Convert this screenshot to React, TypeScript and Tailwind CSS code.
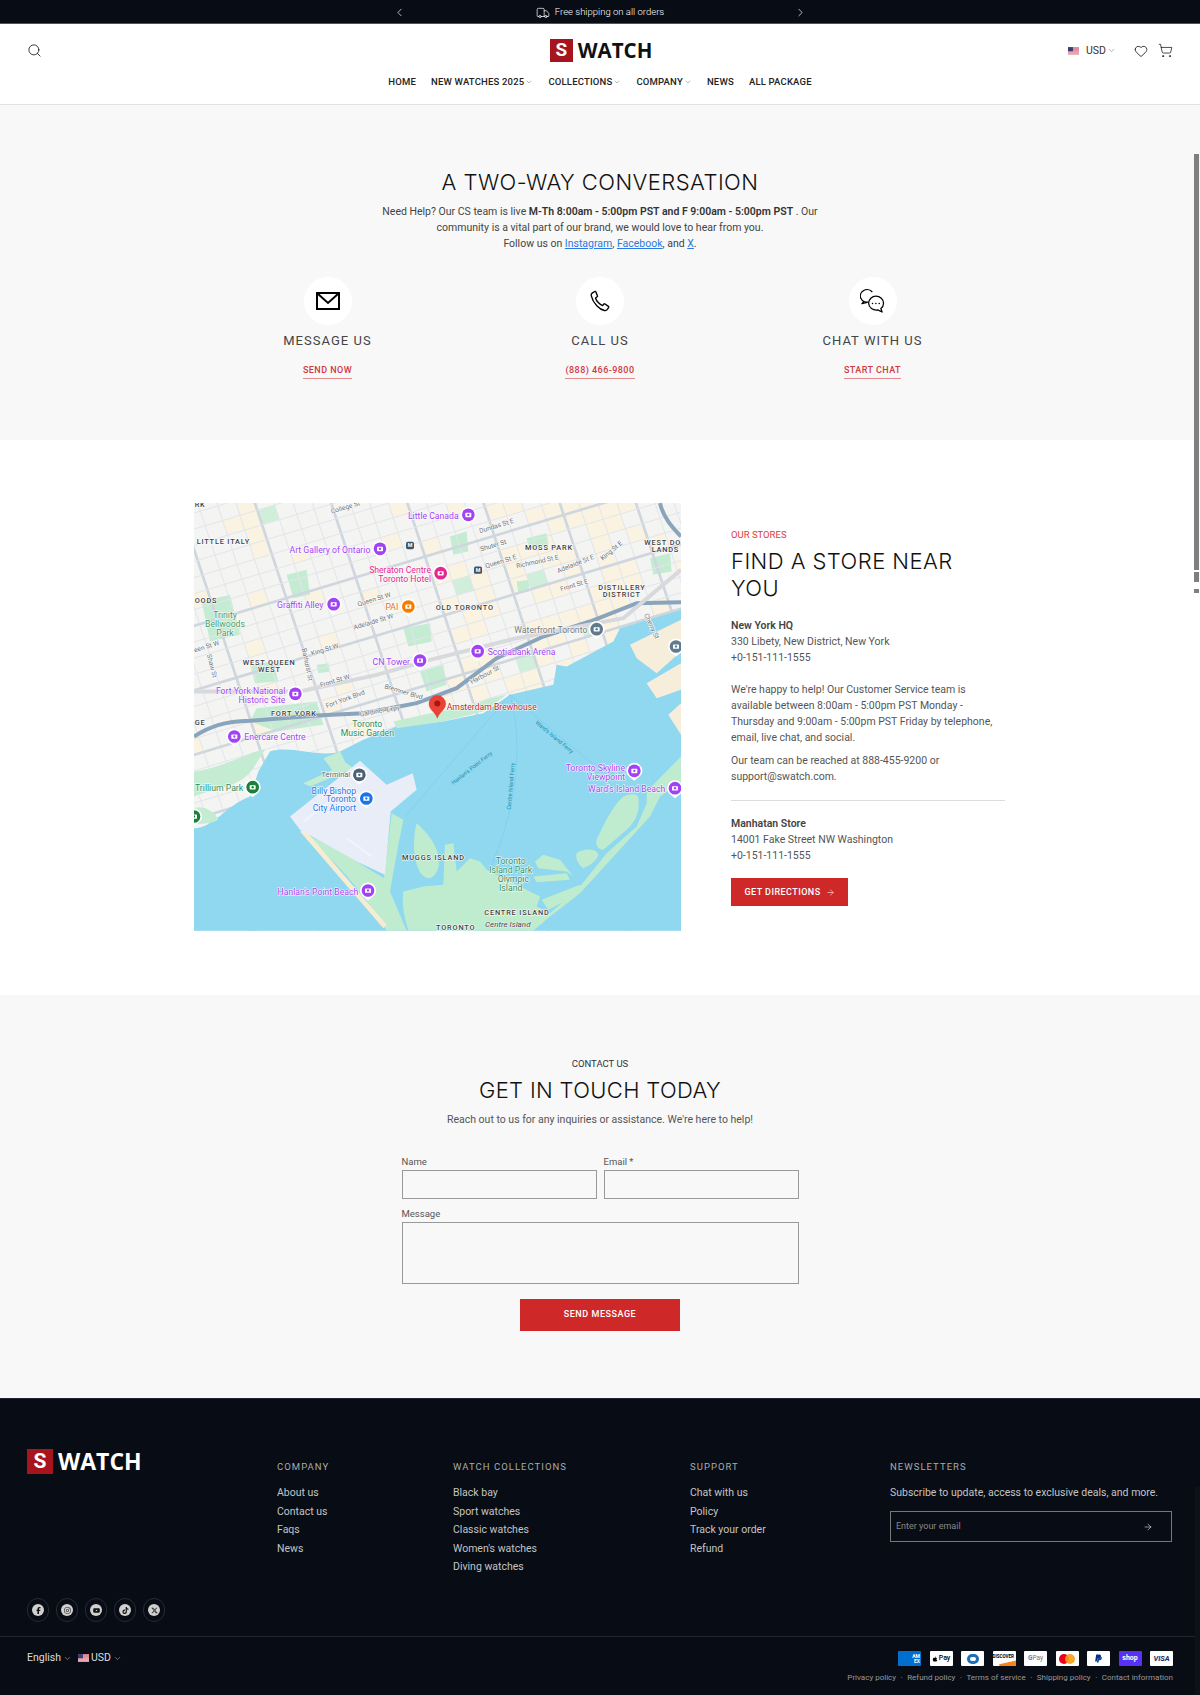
import { ArrowRight, ChevronDown, ChevronLeft, ChevronRight, Heart, Search, ShoppingCart, Truck } from "lucide-react";
import { FaApple, FaFacebookF, FaInstagram, FaPaypal, FaTiktok, FaXTwitter, FaYoutube } from "react-icons/fa6";

const Flag = ({ className }: { className: string }) => (
  <svg viewBox="0 0 20 14" className={className}>
    <rect width="20" height="14" fill="#f4f4f4" />
    {[0, 2, 4, 6, 8, 10, 12].map((y) => (
      <rect key={y} y={y} width="20" height="1.1" fill="#d6455a" />
    ))}
    <rect width="9" height="7.5" fill="#3c3b6e" />
  </svg>
);

const Logo = ({ dark }: { dark?: boolean }) => (
  <div className="flex items-center gap-[5px]">
    <span className={`flex items-center justify-center bg-[#a7141c] font-bold text-white ${dark ? "h-[25px] w-[26px] text-[21px]" : "h-[23px] w-[23px] text-[19px]"}`}>S</span>
    <span className={`font-bold leading-none ${dark ? "text-[23px] text-white" : "text-[20.5px] text-[#111]"}`} style={{ fontFamily: "Open Sans, sans-serif" }}>WATCH</span>
  </div>
);

const navItems = [
  { label: "HOME" },
  { label: "NEW WATCHES 2025", caret: true },
  { label: "COLLECTIONS", caret: true },
  { label: "COMPANY", caret: true },
  { label: "NEWS" },
  { label: "ALL PACKAGE" },
];

const Header = () => (
  <header className="h-[81px] border-b border-[#e3e3e3] bg-white">
    <div className="flex h-[49px] items-center justify-between pl-[27px] pr-[27px] pt-[4px]">
      <Search className="h-[15px] w-[15px] text-[#111]" strokeWidth={1.3} />
      <div className="pl-[92px]"><Logo /></div>
      <div className="flex items-center">
        <Flag className="h-[8px] w-[11px]" />
        <span className="ml-[7px] text-[10.5px] text-[#333]">USD</span>
        <ChevronDown className="ml-[1px] h-[9px] w-[9px] text-[#555]" strokeWidth={1.2} />
        <Heart className="ml-[18px] h-[14px] w-[14px] text-[#111]" strokeWidth={1.4} />
        <ShoppingCart className="ml-[10px] h-[15px] w-[15px] text-[#111]" strokeWidth={1.2} />
      </div>
    </div>
    <nav className="flex items-center justify-center gap-[15px] pt-[2px]">
      {navItems.map((item) => (
        <span key={item.label} className="flex items-center text-[9.5px] font-medium tracking-[0.02em] text-[#222]">
          {item.label}
          {item.caret && <ChevronDown className="ml-[1px] h-[8px] w-[8px] text-[#555]" strokeWidth={1.2} />}
        </span>
      ))}
    </nav>
  </header>
);

const MailIcon = () => (
  <svg viewBox="0 0 24 18" className="h-[18px] w-[24px]" fill="none" stroke="#000" strokeWidth="2">
    <rect x="1" y="1" width="22" height="16" />
    <path d="M1.5 1.5 12 11 22.5 1.5" />
  </svg>
);

const PhoneIcon = () => (
  <svg viewBox="0 0 24 24" className="h-[22px] w-[22px]" fill="none" stroke="#000" strokeWidth="1.5" strokeLinejoin="round">
    <path d="M6.2 1.6 3.4 3.4c-1 .7-1.2 1.8-.9 3 1 4.300 3.200 7.800 6 10.700 2.800 2.900 5.500 4.700 8.400 5.300 1.200.2 2-.1 2.800-1l1.700-2.200c.3-.5.2-1-.2-1.300l-3.700-2.700c-.4-.3-.9-.2-1.200.1l-1.500 1.700c-1.800-.6-3.300-1.800-4.700-3.300-1.400-1.500-2.500-3.200-3-5l1.800-1.300c.4-.3.500-.8.300-1.200L7.400 2c-.3-.5-.8-.7-1.200-.4Z" />
  </svg>
);

const ChatIcon = () => (
  <svg viewBox="0 0 26 25" className="h-[24px] w-[25px]" fill="none" stroke="#000" strokeWidth="1.3" strokeLinejoin="round">
    <path d="M9 13.500a7 6.500 0 1 1 3.800-10.400M4.500 12.500 2 15.300l5.500-1.300" />
    <path d="M16.500 7.500c4.500 0 8 3.200 8 7.300 0 2.300-1 4.200-2.800 5.500l1.300 3.700-4.600-2.200c-4.800.6-9.400-2.400-9.400-7 0-4.100 3.500-7.300 7.500-7.300Z" />
    <circle cx="13" cy="15" r=".8" fill="#000" stroke="none" />
    <circle cx="16.500" cy="15" r=".8" fill="#000" stroke="none" />
    <circle cx="20" cy="15" r=".8" fill="#000" stroke="none" />
  </svg>
);

const contactWays = [
  { title: "MESSAGE US", link: "SEND NOW", icon: <MailIcon /> },
  { title: "CALL US", link: "(888) 466-9800", icon: <PhoneIcon /> },
  { title: "CHAT WITH US", link: "START CHAT", icon: <ChatIcon /> },
];

const Conversation = () => (
  <section className="h-[335px] bg-[#f8f8f8] pt-[63px] text-center">
    <h1 className="text-[22px] font-light leading-[28px] tracking-[0.02em] text-[#111]" style={{ fontFamily: "Inter, sans-serif" }}>A TWO-WAY CONVERSATION</h1>
    <p className="mx-auto mt-[8px] w-[450px] text-[10.5px] leading-[16px] text-[#444]">
      Need Help? Our CS team is live <b className="font-semibold text-[#333]">M-Th 8:00am - 5:00pm PST and F 9:00am - 5:00pm PST</b> . Our community is a vital part of our brand, we would love to hear from you.
      <br />
      Follow us on <a className="text-[#2a7ae2] underline">Instagram</a>, <a className="text-[#2a7ae2] underline">Facebook</a>, and <a className="text-[#2a7ae2] underline">X</a>.
    </p>
    <div className="mx-auto mt-[25px] flex w-[681px] justify-between">
      {contactWays.map((way) => (
        <div key={way.title} className="flex w-[136px] flex-col items-center">
          <div className="flex h-[48px] w-[48px] items-center justify-center rounded-full bg-white">{way.icon}</div>
          <h3 className="mt-[7px] text-[13px] leading-[18px] tracking-[0.08em] text-[#444]">{way.title}</h3>
          <a className="mt-[13px] border-b border-[#e58a8a] pb-[1px] text-[9px] font-medium leading-[14px] tracking-[0.05em] text-[#d0383d]">{way.link}</a>
        </div>
      ))}
    </div>
  </section>
);

const mapLabels: [string, number, number, string, "start" | "end" | "middle"][] = [
  ["Little Canada", 806, 72, "#a142f4", "end"], ["Art Gallery of Ontario", 541, 174, "#a142f4", "end"],
  ["Graffiti Alley", 400, 340, "#a142f4", "end"], ["CN Tower", 660, 510, "#a142f4", "end"],
  ["Scotiabank Arena", 893, 482, "#a142f4", "start"], ["Fort York National", 286, 597, "#a142f4", "end"],
  ["Historic Site", 286, 624, "#a142f4", "end"], ["Enercare Centre", 163, 737, "#a142f4", "start"],
  ["Toronto Skyline", 1305, 829, "#a142f4", "end"], ["Viewpoint", 1305, 856, "#a142f4", "end"],
  ["Ward's Island Beach", 1426, 891, "#a142f4", "end"], ["Hanlan's Point Beach", 505, 1201, "#a142f4", "end"],
  ["Sheraton Centre", 723, 235, "#e52592", "end"], ["Toronto Hotel", 723, 261, "#e52592", "end"],
  ["PAI", 625, 347, "#e8710a", "end"], ["Waterfront Toronto", 1192, 416, "#70757a", "end"],
  ["Amsterdam Brewhouse", 770, 646, "#c5221f", "start"], ["Trinity", 105, 370, "#3f9a63", "middle"],
  ["Bellwoods", 105, 397, "#3f9a63", "middle"], ["Park", 105, 423, "#3f9a63", "middle"],
  ["Toronto", 532, 697, "#278d5c", "middle"], ["Music Garden", 532, 723, "#278d5c", "middle"],
  ["Trillium Park", 15, 889, "#278d5c", "start"], ["Toronto", 962, 1109, "#278d5c", "middle"],
  ["Island Park", 962, 1135, "#278d5c", "middle"], ["Olympic", 970, 1162, "#278d5c", "middle"],
  ["Island", 962, 1188, "#278d5c", "middle"], ["Billy Bishop", 498, 897, "#1a73e8", "end"],
  ["Toronto", 498, 923, "#1a73e8", "end"], ["City Airport", 498, 950, "#1a73e8", "end"],
];

const areaLabels: [string, number, number][] = [
  ["RK", 14, 38], ["LITTLE ITALY", 20, 148], ["MOSS PARK", 1005, 167], ["WEST DO", 1363, 150], ["LANDS", 1385, 172],
  ["DISTILLERY", 1225, 285], ["DISTRICT", 1238, 307], ["OLD TORONTO", 737, 347], ["OODS", 14, 325], ["WEST QUEEN", 158, 510],
  ["WEST", 204, 532], ["FORT YORK", 243, 664], ["GE", 14, 690], ["MUGGS ISLAND", 636, 1097], ["CENTRE ISLAND", 883, 1261], ["TORONTO", 738, 1306],
];

const streetLabels: [string, number, number, number][] = [
  ["College St", 425, 57, -17], ["Dundas St E", 870, 115, -17], ["Shuter St", 873, 170, -17], ["Queen St E", 888, 220, -17],
  ["Richmond St E", 980, 220, -12], ["Adelaide St E", 1105, 235, -22], ["King St E", 1238, 198, -40], ["Front St E", 1113, 290, -17],
  ["Queen St W", 505, 335, -17], ["Adelaide St W", 493, 405, -17], ["King St W", 365, 483, -17], ["Front St W", 392, 578, -17],
  ["Fort York Blvd", 410, 640, -20], ["Bremner Blvd", 582, 580, 17], ["Gardiner Expy", 510, 665, -10], ["Harbour St", 845, 568, -28],
  ["Cherry St", 1362, 360, 65], ["Bathurst St", 335, 462, 78], ["Shaw St", 50, 480, 75], ["een St W", 14, 473, -17],
];

const pins: [number, number, string][] = [
  [835, 60, "#a142f4"], [570, 162, "#a142f4"], [752, 235, "#e52592"], [431, 328, "#a142f4"], [655, 335, "#f57c00"],
  [1220, 403, "#5f7a8c"], [690, 497, "#a142f4"], [863, 469, "#a142f4"], [316, 597, "#a142f4"], [133, 725, "#a142f4"],
  [188, 877, "#188038"], [508, 840, "#4a6076"], [529, 911, "#1a73e8"], [1333, 828, "#a142f4"], [1455, 880, "#a142f4"],
  [534, 1187, "#a142f4"], [1458, 455, "#5f7a8c"], [12, 965, "#188038"],
];

// street grid: i runs east, j runs south
const gridPoint = (i: number, j: number) => [i * 52 + j * 44 * 0.33, 300 + j * 44 - i * 52 * 0.3];

const gridRange = Array.from({ length: 60 }, (_, n) => n - 15);

const cells = gridRange.flatMap((i) =>
  gridRange.flatMap((j) => {
    const [x, y] = gridPoint(i, j);
    if (x < -60 || x > 1520 || y < -40 || y > 760) return [];
    const hash = Math.abs(i * 73 + j * 131 + i * j * 17) % 100;
    const central = x > 760 && x < 1320;
    let fill = "";
    if (hash < (central ? 50 : 10)) fill = "#faf3e1";
    else if (hash > 97) fill = "#cfefdb";
    if (!fill) return [];
    const points = [gridPoint(i, j), gridPoint(i + 1, j), gridPoint(i + 1, j + 1), gridPoint(i, j + 1)].map((p) => p.join(",")).join(" ");
    return [{ key: `${i}-${j}`, points, fill }];
  })
);

const parks: string[] = [
  "M35 320 120 300 150 420 60 440Z", "M290 240 350 225 360 300 310 310Z", "M1010 130 1070 115 1075 150 1020 165Z", "M640 400 720 385 725 440 655 455Z",
  "M180 510 250 500 265 560 195 565Z", "M690 530 760 510 770 570 710 590Z", "M980 260 1020 255 1015 290 985 295Z", "M380 510 415 505 420 530 385 535Z",
  "M1380 190 1440 175 1445 230 1390 240Z", "M780 125 830 110 835 170 790 180Z", "M200 640 380 620 400 690 260 710 180 680Z",
];

const MapPin = ({ x, y, color }: { x: number; y: number; color: string }) => (
  <g>
    <path d={`M${x - 24} ${y} a24 24 0 1 1 48 0 c0 14 -12 20 -24 30 c-12 -10 -24 -16 -24 -30Z`} fill="#fff" />
    <circle cx={x} cy={y} r="19" fill={color} />
    <rect x={x - 9} y={y - 6} width="18" height="13" rx="2" fill="#fff" />
    <circle cx={x} cy={y} r="3.500" fill={color} />
  </g>
);

const StoreMap = () => (
  <svg viewBox="12 25 1461 1283" className="h-[428px] w-[487px] shrink-0" style={{ fontFamily: "Roboto, sans-serif" }}>
    <rect x="12" y="25" width="1461" height="1283" fill="#f4f4f3" />
    {cells.map((c) => <polygon key={c.key} points={c.points} fill={c.fill} />)}
    {parks.map((d) => <path key={d} d={d} fill="#c4ecd2" />)}
    {gridRange.map((i) => {
      const [x1, y1] = gridPoint(i, -15);
      const [x2, y2] = gridPoint(i, 44);
      const major = i % 4 === 1;
      return <line key={`n${i}`} x1={x1} y1={y1} x2={x2} y2={y2} stroke={major ? "#cfd6de" : "#e2e5ea"} strokeWidth={major ? 8 : 3} />;
    })}
    {gridRange.map((j) => {
      const [x1, y1] = gridPoint(-15, j);
      const [x2, y2] = gridPoint(44, j);
      const major = j % 4 === 2;
      return <line key={`e${j}`} x1={x1} y1={y1} x2={x2} y2={y2} stroke={major ? "#cfd6de" : "#e2e5ea"} strokeWidth={major ? 8 : 3} />;
    })}
    <path d="M12 1000C70 1000 110 930 180 905L205 830 240 770C300 750 390 790 450 770L520 735 620 695 760 680 880 655 960 600 1090 570 1100 510 1130 515 1270 440 1290 400 1473 345V1308H12Z" fill="#8fd8ef" />
    <path d="M1320 450 1473 375V470L1400 535 1340 490ZM1370 565 1473 505V585L1400 610ZM1435 660 1473 625V720Z" fill="#f6eedb" />
    <path d="M12 905C70 880 150 880 190 820L225 765C200 760 100 820 12 830Z" fill="#c4ecd2" />
    <path d="M12 940C40 930 75 950 85 975 60 990 30 985 12 990Z" fill="#c4ecd2" />
    <path d="M340 865 470 805 490 820 360 875ZM400 790 450 770 470 810 430 830Z" fill="#c4ecd2" />
    <path d="M610 680 700 660 850 630 900 610 950 600 880 650 760 680 620 700Z" fill="#c4ecd2" />
    <path d="M330 1010C420 1050 500 1100 582 1150L605 955 640 975 625 1050 600 1190 650 1308H590C520 1190 430 1090 330 1010Z" fill="#bfeccf" />
    <path d="M330 1010 345 1005 590 1290 580 1300Z" fill="#f5ecd2" />
    <path d="M300 965 510 798 590 870 668 835 680 885 602 950 585 1140 500 1100 330 1005Z" fill="#e8edf7" />
    <path d="M470 1030 545 1085M340 980 470 880 545 930" fill="none" stroke="#f1f4fa" strokeWidth="7" />
    <path d="M680 985C700 1000 735 1040 745 1080 750 1110 745 1140 720 1150 690 1150 675 1110 672 1060 672 1030 675 1000 680 985Z" fill="#bfeccf" />
    <path d="M640 1190 700 1175 760 1170 765 1050 790 1045 800 1130 840 1090 870 1100 890 1125 990 1175 1050 1205 1040 1235 1080 1255 1170 1175 1250 1075 1340 995 1370 925 1370 890 1473 785V860L1410 905 1380 965 1170 1195 1080 1265 1030 1308H655C640 1260 635 1220 640 1190Z" fill="#bfeccf" />
    <path d="M1220 1035C1240 990 1270 930 1300 905 1320 895 1345 895 1345 910 1350 950 1340 975 1310 1005L1240 1065C1225 1065 1215 1050 1220 1035Z" fill="#bfeccf" />
    <path d="M1160 1075C1180 1060 1220 1060 1225 1080 1220 1100 1195 1115 1180 1120 1165 1110 1155 1090 1160 1075ZM1035 1100 1060 1080 1110 1095 1150 1145 1130 1130 1045 1120ZM1030 1145 1130 1135 1140 1155 1040 1162Z" fill="#bfeccf" />
    <path d="M1055 1215 1170 1170 1170 1195 1075 1245Z" fill="#bfeccf" />
    <path d="M12 725C60 695 100 680 180 678L380 662 520 655 680 625 800 580 920 490 1060 425 1200 380 1340 325 1473 322" fill="none" stroke="#8aa4bc" strokeWidth="12" />
    <path d="M12 590 330 590 560 540 720 495 980 430 1300 370 1473 225" fill="none" stroke="#d7d9dc" strokeWidth="12" />
    <path d="M1410 25C1420 70 1450 100 1473 125" fill="none" stroke="#8aa4bc" strokeWidth="12" />
    <path d="M650 960 960 600M960 600C990 700 1000 900 900 1120M960 600 1210 810" fill="none" stroke="#5cbbd6" strokeWidth="1.500" strokeDasharray="4 4" />
    {pins.map(([x, y, color]) => <MapPin key={`${x}-${y}`} x={x} y={y} color={color} />)}
    <rect x="648" y="141" width="24" height="22" rx="5" fill="#3f5468" /><rect x="852" y="215" width="24" height="22" rx="5" fill="#3f5468" />
    <text x="660" y="158" fontSize="16" fontWeight="700" fill="#fff" textAnchor="middle">M</text>
    <text x="864" y="232" fontSize="16" fontWeight="700" fill="#fff" textAnchor="middle">M</text>
    {streetLabels.map(([t, x, y, r]) => (
      <text key={t} x={x} y={y} fontSize="20" fill="#6b7177" stroke="#fff" strokeWidth="3" paintOrder="stroke" transform={`rotate(${r} ${x} ${y})`}>{t}</text>
    ))}
    {areaLabels.map(([t, x, y]) => (
      <text key={`${t}-${y}`} x={x} y={y} fontSize="22" fontWeight="500" letterSpacing="2.500" fill="#3c4043" stroke="#fff" strokeWidth="3" paintOrder="stroke">{t}</text>
    ))}
    {mapLabels.map(([t, x, y, color, anchor]) => (
      <text key={`${t}-${y}`} x={x} y={y} fontSize="26" fill={color} textAnchor={anchor} stroke="#fff" strokeWidth="3" paintOrder="stroke">{t}</text>
    ))}
    <text x="480" y="846" fontSize="22" fill="#5f6368" textAnchor="end" stroke="#fff" strokeWidth="3" paintOrder="stroke">Terminal</text>
    <text x="885" y="1298" fontSize="24" fontStyle="italic" fill="#3c4043" stroke="#fff" strokeWidth="2" paintOrder="stroke">Centre Island</text>
    <text x="790" y="870" fontSize="17" fill="#1c8ea8" transform="rotate(-38 790 870)">Hanlan's Point Ferry</text>
    <text x="962" y="945" fontSize="17" fill="#1c8ea8" transform="rotate(-85 962 945)">Centre Island Ferry</text>
    <text x="1035" y="685" fontSize="17" fill="#1c8ea8" transform="rotate(40 1035 685)">Ward's Island Ferry</text>
    <path d="M742 670C735 650 717 645 717 627a25 25 0 0 1 50 0C767 645 749 650 742 670Z" fill="#ea4335" stroke="#c5221f" />
    <circle cx="742" cy="626" r="9" fill="#a51712" />
  </svg>
);

const Stores = () => (
  <section className="h-[555px] bg-white pl-[194px] pt-[63px]">
    <div className="flex">
      <StoreMap />
      <div className="ml-[50px] w-[274px] pt-[26px] text-[10.5px] leading-[16px] text-[#555]">
        <div className="text-[9.5px] leading-[12px] tracking-normal text-[#e0383d]">OUR STORES</div>
        <h2 className="mt-[7px] w-[240px] text-[22px] font-light leading-[27px] tracking-[0.02em] text-[#111]" style={{ fontFamily: "Inter, sans-serif" }}>FIND A STORE NEAR YOU</h2>
        <div className="mt-[16px] font-semibold text-[#444]">New York HQ</div>
        <div>330 Libety, New District, New York</div>
        <div>+0-151-111-1555</div>
        <p className="mt-[16px] w-[264px]">We're happy to help! Our Customer Service team is available between 8:00am - 5:00pm PST Monday - Thursday and 9:00am - 5:00pm PST Friday by telephone, email, live chat, and social.</p>
        <p className="mt-[7px]">Our team can be reached at 888-455-9200 or<br />support@swatch.com.</p>
        <hr className="mb-[15px] mt-[15px] border-[#ddd]" />
        <div className="font-semibold text-[#444]">Manhatan Store</div>
        <div>14001 Fake Street NW Washington</div>
        <div>+0-151-111-1555</div>
        <a className="mt-[14px] flex h-[28px] w-[117px] items-center justify-center gap-[5px] bg-[#cf2828] text-[9px] font-medium tracking-[0.05em] text-white">
          GET DIRECTIONS <ArrowRight className="h-[9px] w-[9px]" strokeWidth={1.5} />
        </a>
      </div>
    </div>
  </section>
);

const ContactForm = () => (
  <section className="h-[403px] bg-[#f8f8f8] pt-[63px] text-center">
    <div className="text-[9.5px] leading-[12px] text-[#333]">CONTACT US</div>
    <h2 className="mt-[6px] text-[22px] font-light leading-[28px] tracking-[0.015em] text-[#111]" style={{ fontFamily: "Inter, sans-serif" }}>GET IN TOUCH TODAY</h2>
    <p className="mt-[8px] text-[10.5px] leading-[16px] text-[#555]">Reach out to us for any inquiries or assistance. We're here to help!</p>
    <form className="mx-auto mt-[28px] w-[397px] text-left text-[9.5px] text-[#555]">
      <div className="flex gap-[7px]">
        <label className="block flex-1">
          <span className="block leading-[12px]">Name</span>
          <input className="mt-[2px] block h-[29px] w-full border border-[#999]" />
        </label>
        <label className="block flex-1">
          <span className="block leading-[12px]">Email *</span>
          <input className="mt-[2px] block h-[29px] w-full border border-[#999]" />
        </label>
      </div>
      <label className="mt-[9px] block">
        <span className="block leading-[12px]">Message</span>
        <textarea className="mt-[2px] block h-[62px] w-full resize-none border border-[#999]" />
      </label>
      <button type="button" className="mx-auto mt-[15px] block h-[32px] w-[160px] bg-[#cf2828] text-center text-[9px] font-medium tracking-[0.06em] text-white">SEND MESSAGE</button>
    </form>
  </section>
);

const footerColumns = [
  { title: "COMPANY", width: "w-[176px]", links: ["About us", "Contact us", "Faqs", "News"] },
  { title: "WATCH COLLECTIONS", width: "w-[237px]", links: ["Black bay", "Sport watches", "Classic watches", "Women's watches", "Diving watches"] },
  { title: "SUPPORT", width: "w-[200px]", links: ["Chat with us", "Policy", "Track your order", "Refund"] },
];

const socials = [FaFacebookF, FaInstagram, FaYoutube, FaTiktok, FaXTwitter];

const payments = [
  <div key="amex" className="flex h-[15px] w-[23px] items-center justify-end rounded-[1px] bg-[#016fd0] pr-[1px] text-right text-[5px] font-bold leading-[5px] text-white">AM<br />EX</div>,
  <div key="apple" className="flex h-[15px] w-[23px] items-center justify-center gap-[1px] rounded-[1px] bg-white text-[7px] font-medium text-black"><FaApple className="h-[6px] w-[6px]" />Pay</div>,
  <div key="diners" className="flex h-[15px] w-[23px] items-center justify-center rounded-[1px] bg-white"><span className="h-[10px] w-[12px] rounded-full border-[3px] border-[#1a6fb8]" /></div>,
  <div key="discover" className="relative h-[15px] w-[23px] overflow-hidden rounded-[1px] bg-white text-[4.5px] font-bold leading-[12px] text-black">DISCOVER<span className="absolute -bottom-[6px] -right-[4px] h-[10px] w-[20px] -rotate-12 bg-[#f58220]" /></div>,
  <div key="gpay" className="flex h-[15px] w-[23px] items-center justify-center rounded-[1px] bg-white text-[6.5px] text-[#777]"><span className="font-bold text-[#4285f4]">G</span>Pay</div>,
  <div key="mc" className="flex h-[15px] w-[23px] items-center justify-center rounded-[1px] bg-white"><span className="h-[10px] w-[10px] rounded-full bg-[#eb001b]" /><span className="-ml-[4px] h-[10px] w-[10px] rounded-full bg-[#f79e1b]/90" /></div>,
  <div key="paypal" className="flex h-[15px] w-[23px] items-center justify-center rounded-[1px] bg-white text-[#003087]"><FaPaypal className="h-[9px] w-[9px]" /></div>,
  <div key="shop" className="flex h-[15px] w-[23px] items-center justify-center rounded-[1px] bg-[#5a31f4] text-[7px] font-bold text-white">shop</div>,
  <div key="visa" className="flex h-[15px] w-[23px] items-center justify-center rounded-[1px] bg-white text-[7.5px] font-bold italic text-[#1a2a6c]">VISA</div>,
];

const policies = ["Privacy policy", "Refund policy", "Terms of service", "Shipping policy", "Contact information"];

const Footer = () => (
  <footer className="h-[297px] border-t border-[#20242c] bg-[#080c14] text-[#c4c4c4]">
    <div className="h-[238px] border-b border-[#22262e] px-[27px]">
      <div className="flex h-full">
        <div className="flex w-[250px] flex-col justify-between pb-[14px] pt-[50px]">
          <Logo dark />
          <div className="flex gap-[7px]">
            {socials.map((Icon, i) => (
              <span key={i} className="flex h-[24px] w-[22px] items-center justify-center rounded-full border border-[#262a32]">
                <span className="flex h-[12px] w-[12px] items-center justify-center rounded-full bg-[#d0d0d0] text-[#111]"><Icon className="h-[7px] w-[7px]" /></span>
              </span>
            ))}
          </div>
        </div>
        {footerColumns.map((col) => (
          <div key={col.title} className={`${col.width} pt-[61px]`}>
            <h4 className="text-[9.5px] leading-[14px] tracking-[0.11em] text-[#aaa]">{col.title}</h4>
            <ul className="mt-[10px]">
              {col.links.map((link) => <li key={link} className="text-[10.5px] leading-[18.600px]">{link}</li>)}
            </ul>
          </div>
        ))}
        <div className="w-[282px] pt-[61px]">
          <h4 className="text-[9.5px] leading-[14px] tracking-[0.11em] text-[#aaa]">NEWSLETTERS</h4>
          <p className="mt-[10px] whitespace-nowrap text-[10.5px] leading-[18px]">Subscribe to update, access to exclusive deals, and more.</p>
          <div className="mt-[9px] flex h-[31px] items-center justify-between border border-[#777] pl-[5px] pr-[18px]">
            <span className="text-[9px] text-[#888]">Enter your email</span>
            <ArrowRight className="h-[10px] w-[10px] text-white" strokeWidth={1.3} />
          </div>
        </div>
      </div>
    </div>
    <div className="flex justify-between px-[27px] pt-[14px]">
      <div className="flex items-center self-start text-[10.5px] leading-[14px] text-[#ddd]">
        English <ChevronDown className="ml-[2px] h-[9px] w-[9px]" strokeWidth={1.2} />
        <Flag className="ml-[6px] h-[8px] w-[11px]" />
        <span className="ml-[2px]">USD</span>
        <ChevronDown className="ml-[2px] h-[9px] w-[9px]" strokeWidth={1.2} />
      </div>
      <div className="flex flex-col items-end">
        <div className="flex gap-[8.500px]">{payments}</div>
        <div className="mt-[6px] flex items-center text-[8px] leading-[12px] text-[#999]">
          {policies.map((p, i) => (
            <span key={p} className="flex items-center">
              {i > 0 && <span className="mx-[4.500px]">·</span>}
              {p}
            </span>
          ))}
        </div>
      </div>
    </div>
  </footer>
);

export default function App() {
  return (
    <div className="relative h-[1695px] overflow-hidden bg-white" style={{ fontFamily: "Roboto, sans-serif" }}>
      <div className="flex h-[24px] items-center justify-center border-b border-[#555] bg-[#080c14] pt-[2px] text-white">
        <ChevronLeft className="h-[13px] w-[13px]" strokeWidth={1.3} />
        <div className="flex w-[388px] items-center justify-center gap-[5px] text-[9.5px] font-light">
          <Truck className="h-[14px] w-[14px]" strokeWidth={1.2} />
          Free shipping on all orders
        </div>
        <ChevronRight className="h-[13px] w-[13px]" strokeWidth={1.3} />
      </div>
      <Header />
      <Conversation />
      <Stores />
      <ContactForm />
      <Footer />
      <span className="absolute right-[1px] top-[154px] h-[416px] w-[5px] bg-[#7f7f7f]" />
      <span className="absolute right-[1px] top-[572px] h-[10px] w-[5px] bg-[#7f7f7f]" />
      <span className="absolute right-[1px] top-[589px] h-[4px] w-[5px] bg-[#7f7f7f]" />
      <span className="absolute right-0 top-[1487px] h-[208px] w-[5px] bg-[#0e1218]" />
    </div>
  );
}
